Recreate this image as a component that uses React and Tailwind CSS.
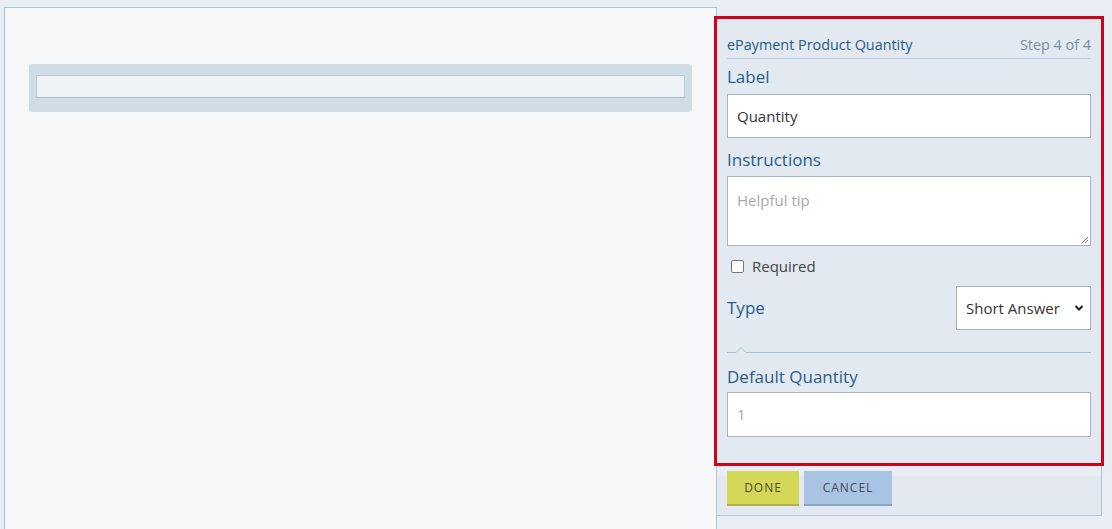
import React from 'react';

const FONT = { fontFamily: '"Open Sans", "Liberation Sans", sans-serif' };

const FieldLabel = ({ children, className = '' }) => (
  <div className={`text-[17px] leading-[24px] text-[#2a5d86] ${className}`}>{children}</div>
);

const App = () => {
  return (
    <div className="min-h-[529px] w-[1112px] bg-[#e8eef3] flex items-start overflow-hidden" style={FONT}>
      {/* canvas */}
      <div className="ml-[4px] mt-[7px] w-[713px] h-[530px] border border-[#aac3dc] bg-[#f7f8fa] px-[24px] pt-[56px]">
        <div className="rounded-[3px] bg-[#d0dde7] px-[7px] pt-[11px] pb-[14px]">
          <div className="h-[23px] border border-[#bccbd9] border-b-[#a9b8c7] bg-[#eef2f6]"></div>
        </div>
      </div>

      {/* editor column */}
      <div className="ml-[-3px] mt-[16px] w-[390px] flex flex-col">
        <div className="h-[450px] border-[3px] border-[#d0021b] bg-[#e2e9f0] px-[10px] pt-[16px]">
          <div className="flex items-baseline justify-between border-b border-[#b8cfe6] pb-[3px] leading-[20px]">
            <span className="text-[14.4px] text-[#2b5a80]">ePayment Product Quantity</span>
            <span className="text-[14.4px] text-[#7a8ea3]">Step 4 of 4</span>
          </div>

          <FieldLabel className="mt-[6px]">Label</FieldLabel>
          <div className="mt-[5px] h-[44px] border border-[#a7b3bf] bg-white px-[9px] flex items-center text-[15px] text-[#333]">
            Quantity
          </div>

          <FieldLabel className="mt-[10px]">Instructions</FieldLabel>
          <div className="relative mt-[4px] h-[70px] border border-[#a7b3bf] bg-white px-[9px] pt-[12px] text-[15px] text-[#a9a9a9]">
            Helpful tip
            <svg className="absolute right-[1px] bottom-[1px]" width="9" height="9" viewBox="0 0 9 9">
              <path d="M8 2 L2 8 M8 5 L5 8" stroke="#777" strokeWidth="1" />
            </svg>
          </div>

          <div className="mt-[10px] h-[20px] flex items-center pl-[4px]">
            <span className="w-[13px] h-[13px] rounded-[2px] border border-[#767676] bg-white"></span>
            <span className="ml-[8px] text-[15px] text-[#444]">Required</span>
          </div>

          <div className="mt-[10px] flex items-center justify-between">
            <FieldLabel>Type</FieldLabel>
            <div className="h-[44px] w-[135px] border border-[#a7b3bf] bg-white flex items-center justify-between pl-[9px] pr-[6px] text-[15px] text-[#333]">
              <span>Short Answer</span>
              <svg width="10" height="8" viewBox="0 0 10 8">
                <path d="M1.5 2 L5 5.5 L8.5 2" fill="none" stroke="#222" strokeWidth="2" />
              </svg>
            </div>
          </div>

          <svg className="mt-[16px] block" width="364" height="7" viewBox="0 0 364 7">
            <path d="M0 6.5 H9 L14 1.5 L19 6.5 H364" fill="none" stroke="#a4bfd4" strokeWidth="1" />
          </svg>

          <FieldLabel className="mt-[12px]">Default Quantity</FieldLabel>
          <div className="mt-[3px] h-[45px] border border-[#a7b3bf] bg-white px-[9px] flex items-center text-[15px] text-[#a9a9a9]">
            1
          </div>
        </div>

        {/* footer */}
        <div className="mx-[2px] h-[50px] border-x border-b border-[#b0c5d8] bg-[linear-gradient(#e8eef3_10px,#e2e9f0_10px)] pl-[10px] pt-[5px] flex items-start gap-[5px]">
          <button className="h-[35px] w-[72px] bg-[#d4d856] border-b-2 border-[#b0b34a] text-[12px] tracking-[1px] text-[#4a4a3a]">
            DONE
          </button>
          <button className="h-[35px] w-[88px] bg-[#a8c4e2] border-b-2 border-[#8ca7c3] text-[12px] tracking-[1px] text-[#444a55]">
            CANCEL
          </button>
        </div>
      </div>
    </div>
  );
};

export default App;
